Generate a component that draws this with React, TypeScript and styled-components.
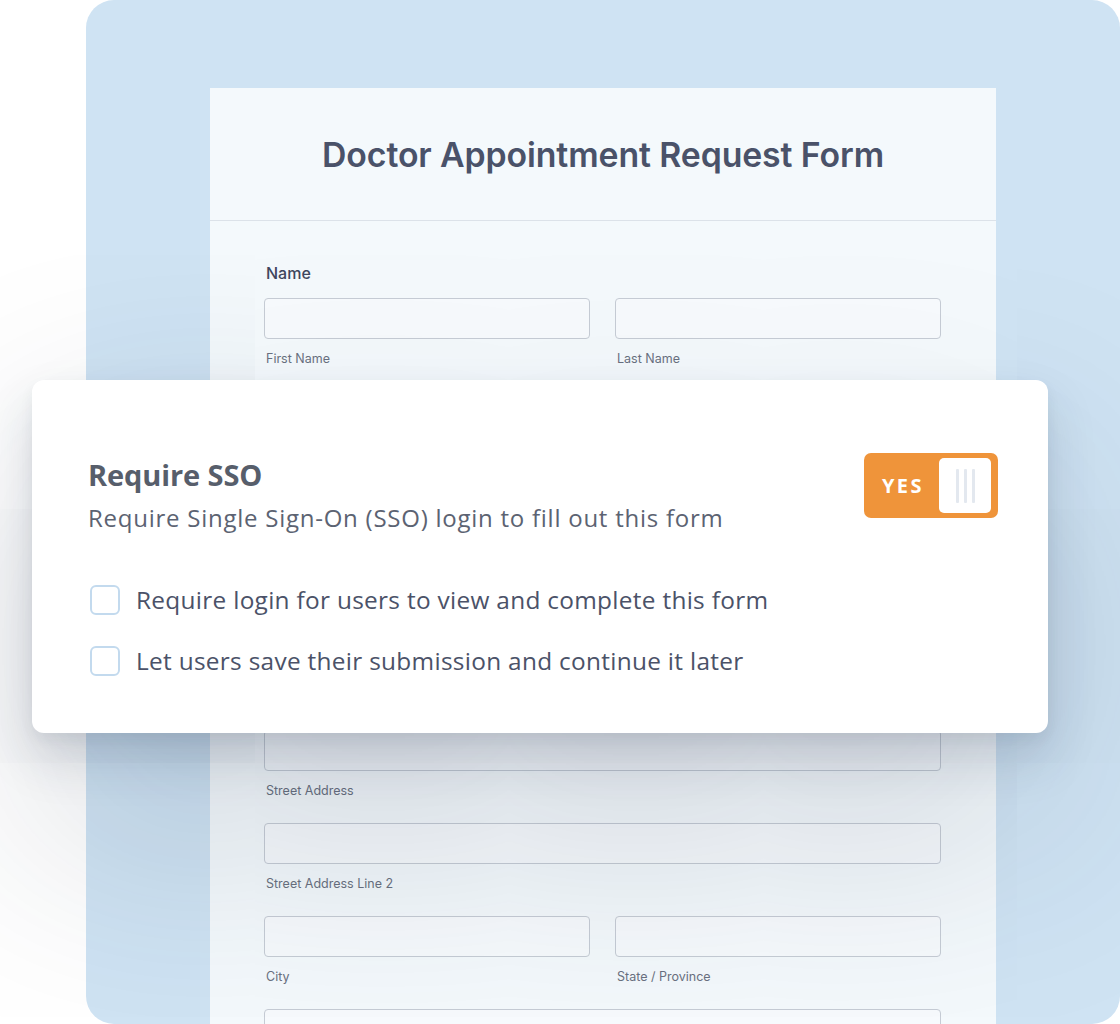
import React from "react";
import styled, { createGlobalStyle } from "styled-components";

const GlobalStyle = createGlobalStyle`
  html, body { margin: 0; padding: 0; background: #ffffff; }
  * { box-sizing: border-box; }
`;

const Stage = styled.div`
  position: relative;
  width: 1120px;
  height: 1024px;
  overflow: hidden;
  padding-left: 86px;
  display: flex;
  background: #ffffff;
`;

const BluePanel = styled.div`
  flex: 1;
  height: 1024px;
  background: #cfe3f3;
  border-radius: 28px;
  padding: 88px 0 0 124px;
  overflow: hidden;
`;

const FormCard = styled.div`
  width: 786px;
  min-height: 1100px;
  background: #f4f9fc;
  font-family: Inter, "Noto Sans", sans-serif;
`;

const FormHeader = styled.div`
  height: 133px;
  border-bottom: 1px solid #dce2e9;
  display: flex;
  align-items: center;
  justify-content: center;
`;

const FormTitle = styled.h1`
  margin: 0;
  font-size: 33.8px;
  font-weight: 600;
  color: #4a5269;
  letter-spacing: -0.1px;
`;

const FormBody = styled.div`
  padding: 42px 55px 0 54px;
  display: flex;
  flex-direction: column;
`;

const FieldGroup = styled.div<{ $spaceBefore?: number }>`
  display: flex;
  flex-direction: column;
  margin-top: ${(p) => p.$spaceBefore ?? 0}px;
`;

const FieldLabel = styled.div`
  font-size: 16px;
  line-height: 20px;
  font-weight: 500;
  color: #3f475e;
  padding-left: 2px;
  margin-bottom: 15px;
`;

const FieldRow = styled.div`
  display: grid;
  grid-template-columns: repeat(2, 1fr);
  column-gap: 25px;
  row-gap: 25px;
`;

const FieldCell = styled.div<{ $wide?: boolean }>`
  display: flex;
  flex-direction: column;
  grid-column: ${(p) => (p.$wide ? "1 / span 2" : "auto")};
`;

const InputBox = styled.div`
  height: 41px;
  border: 1px solid #c6ccd5;
  border-radius: 4px;
  background: #f7fafd;
`;

const SubLabel = styled.div`
  margin-top: 13px;
  font-size: 12.5px;
  line-height: 14px;
  color: #6a7180;
  padding-left: 2px;
`;

const OverlayCard = styled.div`
  position: absolute;
  left: 32px;
  top: 380px;
  width: 1016px;
  height: 353px;
  background: #ffffff;
  border-radius: 12px;
  padding: 73px 50px 0 56px;
  font-family: "Open Sans", "Noto Sans", sans-serif;
  box-shadow: 0 6px 14px rgba(30, 45, 70, 0.06), 0 26px 50px rgba(30, 50, 80, 0.16),
    0 90px 240px rgba(30, 45, 70, 0.2);
`;

const CardHeader = styled.div`
  display: flex;
  justify-content: space-between;
  align-items: flex-start;
`;

const CardText = styled.div`
  display: flex;
  flex-direction: column;
`;

const CardTitle = styled.div`
  margin-top: 3px;
  font-size: 29px;
  line-height: 38px;
  font-weight: 700;
  color: #575e6b;
  letter-spacing: -0.1px;
`;

const CardSubtitle = styled.div`
  margin-top: 8px;
  font-size: 24px;
  line-height: 32px;
  letter-spacing: 0.75px;
  color: #5c6372;
`;

const Toggle = styled.div`
  width: 134px;
  height: 65px;
  border-radius: 7px;
  background: #ef943a;
  display: flex;
  align-items: center;
  padding: 4px 7px 4px 0;
`;

const ToggleLabel = styled.span`
  flex: 1;
  text-align: center;
  color: #ffffff;
  font-family: "Open Sans", sans-serif;
  font-weight: 700;
  font-size: 20px;
  letter-spacing: 2.5px;
  padding-left: 3px;
`;

const Knob = styled.div`
  width: 52px;
  height: 55px;
  background: #ffffff;
  border-radius: 5px;
  display: flex;
  align-items: center;
  justify-content: center;
  gap: 5px;
`;

const KnobLine = styled.span`
  width: 3px;
  height: 34px;
  background: #e3e8ef;
  border-radius: 1px;
`;

const OptionList = styled.div`
  margin-top: 51px;
  display: flex;
  flex-direction: column;
  gap: 31px;
`;

const OptionRow = styled.label`
  display: flex;
  align-items: center;
  gap: 16px;
  height: 30px;
`;

const Checkbox = styled.span`
  margin-left: 2px;
  width: 30px;
  height: 30px;
  border: 2px solid #c3daee;
  border-radius: 6px;
  background: #ffffff;
  flex: none;
`;

const OptionText = styled.span`
  font-size: 24.4px;
  line-height: 30px;
  letter-spacing: 0.3px;
  color: #4b5268;
`;

type Cell = { label?: string };

const Field = ({
  label,
  rows,
  spaceBefore,
}: {
  label?: string;
  rows: Cell[][];
  spaceBefore?: number;
}) => (
  <FieldGroup $spaceBefore={spaceBefore}>
    {label && <FieldLabel>{label}</FieldLabel>}
    <FieldRow>
      {rows.map((r, i) =>
        r.map((c, j) => (
          <FieldCell key={`${i}-${j}`} $wide={r.length === 1}>
            <InputBox />
            {c.label && <SubLabel>{c.label}</SubLabel>}
          </FieldCell>
        ))
      )}
    </FieldRow>
  </FieldGroup>
);

export default function App() {
  return (
    <>
      <GlobalStyle />
      <Stage>
        <BluePanel>
          <FormCard>
            <FormHeader>
              <FormTitle>Doctor Appointment Request Form</FormTitle>
            </FormHeader>
            <FormBody>
              <Field label="Name" rows={[[{ label: "First Name" }, { label: "Last Name" }]]} />
              <Field
                spaceBefore={329}
                label="Address"
                rows={[
                  [{ label: "Street Address" }],
                  [{ label: "Street Address Line 2" }],
                  [{ label: "City" }, { label: "State / Province" }],
                  [{}],
                ]}
              />
            </FormBody>
          </FormCard>
        </BluePanel>
        <OverlayCard>
          <CardHeader>
            <CardText>
              <CardTitle>Require SSO</CardTitle>
              <CardSubtitle>Require Single Sign-On (SSO) login to fill out this form</CardSubtitle>
            </CardText>
            <Toggle>
              <ToggleLabel>YES</ToggleLabel>
              <Knob>
                <KnobLine />
                <KnobLine />
                <KnobLine />
              </Knob>
            </Toggle>
          </CardHeader>
          <OptionList>
            <OptionRow>
              <Checkbox />
              <OptionText>Require login for users to view and complete this form</OptionText>
            </OptionRow>
            <OptionRow>
              <Checkbox />
              <OptionText>Let users save their submission and continue it later</OptionText>
            </OptionRow>
          </OptionList>
        </OverlayCard>
      </Stage>
    </>
  );
}
